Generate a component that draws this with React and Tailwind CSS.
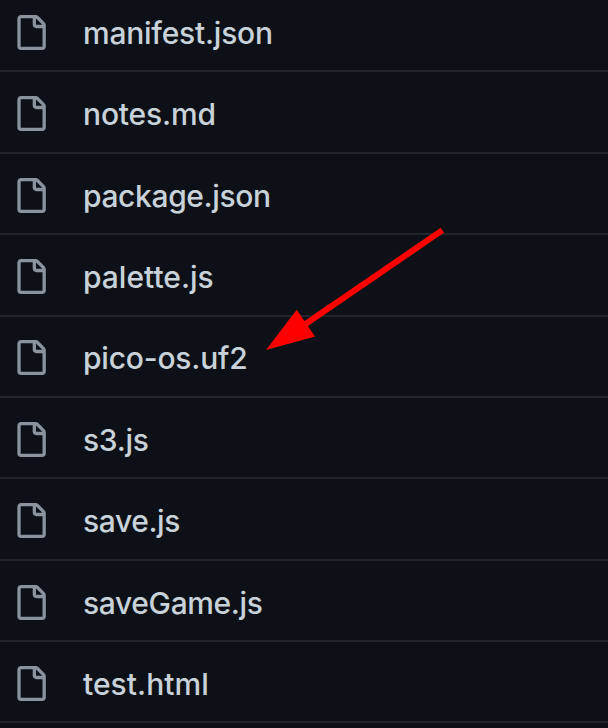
const files = [
  { name: 'manifest.json', tracking: 'tracking-[-0.23px]' },
  { name: 'notes.md', tracking: 'tracking-[-0.15px]' },
  { name: 'package.json', tracking: 'tracking-[-0.37px]' },
  { name: 'palette.js', tracking: 'tracking-[0px]' },
  { name: 'pico-os.uf2', tracking: 'tracking-[-0.2px]' },
  { name: 's3.js', tracking: 'tracking-[-0.3px]' },
  { name: 'save.js', tracking: 'tracking-[-0.4px]' },
  { name: 'saveGame.js', tracking: 'tracking-[-0.36px]' },
  { name: 'test.html', tracking: 'tracking-[0.05px]' },
];

function FileIcon() {
  return (
    <svg viewBox="0 0 16 16" className="size-[35px] shrink-0 fill-[#8b949e]">
      <path d="M2 1.75C2 .784 2.784 0 3.75 0h6.586c.464 0 .909.184 1.237.513l2.914 2.914c.329.328.513.773.513 1.237v9.586A1.75 1.75 0 0 1 13.25 16h-9.5A1.75 1.75 0 0 1 2 14.25Zm1.75-.25a.25.25 0 0 0-.25.25v12.5c0 .138.112.25.25.25h9.5a.25.25 0 0 0 .25-.25V6h-2.75A1.75 1.75 0 0 1 9 4.25V1.5Zm6.75.062V4.25c0 .138.112.25.25.25h2.688l-.011-.013-2.914-2.914-.013-.011Z" />
    </svg>
  );
}

export default function App() {
  return (
    <div className="relative h-[728px] w-full overflow-hidden bg-[#0d1117] font-['Inter',sans-serif] text-[30px] font-[450] text-[#c9d1d9]">
      <div className="-mt-[9px]">
        {files.map(({ name, tracking }) => (
          <div key={name} className="flex h-[81.375px] items-center border-b-2 border-[#21262d] pt-[3.4px] pl-[12.7px]">
            <FileIcon />
            <span className={`ml-[35.3px] pt-[2px] whitespace-nowrap ${tracking}`}>{name}</span>
          </div>
        ))}
      </div>
      <svg className="absolute left-0 top-0 h-[728px] w-[608px]" viewBox="0 0 608 728">
        <path d="M442.3 230.3L304 325" stroke="#ff0000" strokeWidth="6" />
        <path d="M266 350L296.7 309.7L315 336.5Z" fill="#ff0000" />
      </svg>
    </div>
  );
}
